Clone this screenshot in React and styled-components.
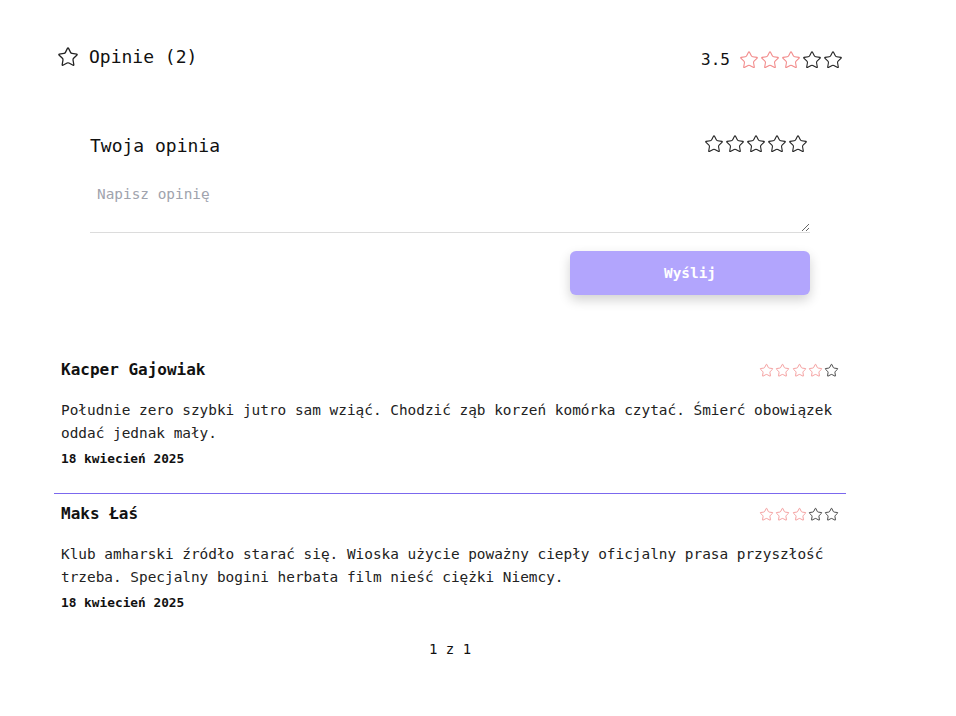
import React from "react";
import styled, { createGlobalStyle } from "styled-components";
import { Star } from "lucide-react";

const GlobalStyle = createGlobalStyle`
  html, body { margin: 0; padding: 0; background: #fff; }
  body { font-family: "DejaVu Sans Mono", "Liberation Mono", monospace; color: #111; }
  * { box-sizing: border-box; }
`;

const Page = styled.div`
  width: 800px;
  margin-left: 50px;
  padding-top: 45px;
`;

const Header = styled.div`
  display: flex;
  justify-content: space-between;
  align-items: flex-start;
  padding: 0 7px;
`;

const TitleGroup = styled.div`
  display: flex;
  align-items: center;
  gap: 10px;
`;

const Title = styled.h2`
  margin: 0;
  font-size: 18px;
  line-height: 24px;
  font-weight: 400;
  color: #111;
`;

const AvgGroup = styled.div`
  display: flex;
  align-items: center;
  gap: 9px;
  padding-top: 5px;
`;

const AvgValue = styled.span`
  font-size: 16px;
  line-height: 20px;
  color: #111;
`;

const StarRow = styled.div`
  display: flex;
  align-items: center;
  gap: ${(p) => p.$gap}px;
`;

const FormBox = styled.form`
  margin-top: 64px;
  padding: 0 40px;
  display: flex;
  flex-direction: column;
`;

const FormHead = styled.div`
  display: flex;
  justify-content: space-between;
  align-items: flex-start;
`;

const FormStars = styled.div`
  margin-right: 2px;
`;

const TextArea = styled.textarea`
  margin-top: 16px;
  width: 100%;
  height: 59px;
  border: none;
  border-bottom: 1px solid #dcdcdc;
  padding: 9px 7px 7px;
  font-family: inherit;
  font-size: 14.4px;
  line-height: 23px;
  color: #333;
  outline: none;
  &::placeholder { color: #a0a3ad; }
`;

const SubmitButton = styled.button`
  align-self: flex-end;
  margin-top: 18px;
  width: 240px;
  height: 44px;
  border: none;
  border-radius: 6px;
  background: #b2a5fd;
  color: #fff;
  font-family: inherit;
  font-size: 14.4px;
  font-weight: 700;
  box-shadow: 0 5px 12px rgba(0, 0, 0, 0.18);
  cursor: pointer;
`;

const ReviewList = styled.div`
  margin: 55px 4px 0;
`;

const ReviewItem = styled.div`
  padding: 8px 7px 26px;
  & + & { border-top: 1px solid #7b68ee; }
`;

const ReviewHead = styled.div`
  display: flex;
  justify-content: space-between;
  align-items: center;
`;

const Author = styled.span`
  font-size: 16px;
  line-height: 24px;
  font-weight: 700;
  color: #111;
`;

const Body = styled.p`
  margin: 17px 0 0;
  font-size: 14.4px;
  line-height: 23px;
  color: #222;
`;

const DateText = styled.div`
  margin-top: 6px;
  font-size: 12.8px;
  line-height: 16px;
  font-weight: 700;
  color: #111;
`;

const Pagination = styled.div`
  text-align: center;
  font-size: 14px;
  line-height: 20px;
  color: #111;
  margin-top: 2px;
`;

const Stars = ({ count = 0, size, gap, stroke = 1.5 }) => (
  <StarRow $gap={gap}>
    {[0, 1, 2, 3, 4].map((i) => (
      <Star
        key={i}
        size={size}
        strokeWidth={stroke}
        color={i < count ? "#f28b8b" : "#222"}
      />
    ))}
  </StarRow>
);

const reviews = [
  {
    name: "Kacper Gajowiak",
    rating: 4,
    text: "Południe zero szybki jutro sam wziąć. Chodzić ząb korzeń komórka czytać. Śmierć obowiązek oddać jednak mały.",
    date: "18 kwiecień 2025",
  },
  {
    name: "Maks Łaś",
    rating: 3,
    text: "Klub amharski źródło starać się. Wioska użycie poważny ciepły oficjalny prasa przyszłość trzeba. Specjalny bogini herbata film nieść ciężki Niemcy.",
    date: "18 kwiecień 2025",
  },
];

export default function App() {
  return (
    <>
      <GlobalStyle />
      <Page>
        <Header>
          <TitleGroup>
            <Star size={22} strokeWidth={1.4} color="#222" />
            <Title>Opinie (2)</Title>
          </TitleGroup>
          <AvgGroup>
            <AvgValue>3.5</AvgValue>
            <Stars count={3} size={20} gap={1} stroke={1.3} />
          </AvgGroup>
        </Header>

        <FormBox onSubmit={(e) => e.preventDefault()}>
          <FormHead>
            <Title>Twoja opinia</Title>
            <FormStars>
              <Stars count={0} size={20} gap={1} stroke={1.3} />
            </FormStars>
          </FormHead>
          <TextArea placeholder="Napisz opinię" />
          <SubmitButton type="submit">Wyślij</SubmitButton>
        </FormBox>

        <ReviewList>
          {reviews.map((r) => (
            <ReviewItem key={r.name}>
              <ReviewHead>
                <Author>{r.name}</Author>
                <Stars count={r.rating} size={15} gap={1.2} stroke={1.3} />
              </ReviewHead>
              <Body>{r.text}</Body>
              <DateText>{r.date}</DateText>
            </ReviewItem>
          ))}
        </ReviewList>
        <Pagination>1 z 1</Pagination>
      </Page>
    </>
  );
}
